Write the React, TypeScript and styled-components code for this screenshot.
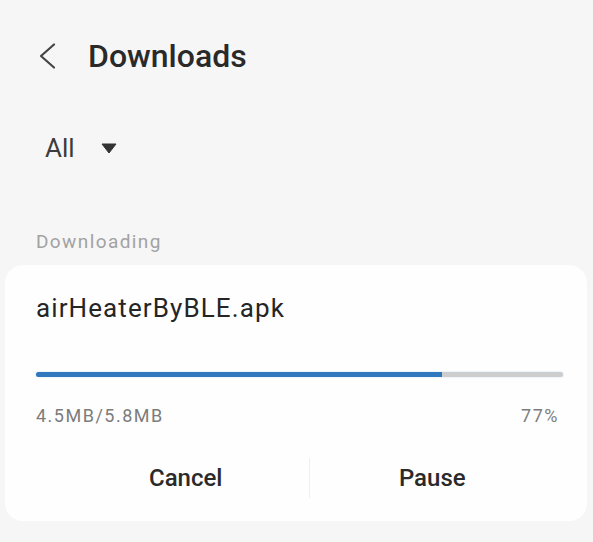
import React from "react";
import styled, { createGlobalStyle } from "styled-components";

const Global = createGlobalStyle`
  html, body { margin: 0; padding: 0; background: #f6f6f6; }
  body { font-family: Roboto, "Noto Sans", "Liberation Sans", sans-serif; }
`;

const Page = styled.div`
  width: 593px;
  height: 542px;
  background: #f6f6f6;
  display: flex;
  flex-direction: column;
  overflow: hidden;
`;

const Header = styled.div`
  display: flex;
  align-items: center;
  height: 54px;
  padding: 29px 0 0 38px;
  gap: 32px;
`;

const Title = styled.h1`
  margin: 0;
  font-size: 32px;
  font-weight: 500;
  color: #2a2a2a;
  line-height: 54px;
`;

const Filter = styled.div`
  display: flex;
  align-items: center;
  gap: 26px;
  padding: 50px 0 0 45px;
  height: 30px;
  font-size: 26px;
  line-height: 30px;
  color: #3c3c3c;
`;

const Section = styled.div`
  padding: 67px 0 0 36px;
  font-size: 19px;
  letter-spacing: 1.4px;
  line-height: 24px;
  color: #a2a2a2;
  height: 24px;
`;

const Card = styled.div`
  margin: 11px 6px 0 5px;
  height: 256px;
  background: #fefefe;
  border-radius: 18px;
  padding: 28px 24px 0 31px;
  box-sizing: border-box;
  display: flex;
  flex-direction: column;
`;

const FileName = styled.div`
  font-size: 26px;
  letter-spacing: 1.1px;
  color: #252525;
  height: 30px;
  line-height: 30px;
`;

const Track = styled.div`
  margin-top: 49px;
  height: 5px;
  border-radius: 3px;
  background: #cdcdcd;
  overflow: hidden;
  box-shadow: 0 0 2px rgba(120, 190, 240, 0.45);
`;

const Fill = styled.div`
  height: 100%;
  background: #2f78bd;
`;

const Stats = styled.div`
  display: flex;
  justify-content: space-between;
  margin-top: 28px;
  padding-right: 4px;
  font-size: 18px;
  line-height: 21px;
  letter-spacing: 1.5px;
  color: #7c7c7c;
`;

const Actions = styled.div`
  display: flex;
  align-items: center;
  margin: 29px 8px 0 27px;
  height: 46px;
`;

const Action = styled.button`
  flex: 1;
  border: none;
  background: transparent;
  font-family: inherit;
  font-size: 24px;
  font-weight: 500;
  color: #2a2a2a;
  padding: 0;
  height: 46px;
`;

const Divider = styled.div`
  width: 1px;
  height: 40px;
  background: #f0f0f0;
`;

export default function App() {
  const pct = 77;
  return (
    <Page>
      <Global />
      <Header>
        <svg width="18" height="26" viewBox="0 0 18 26">
          <path d="M16 1.5 L3 13 L16 24.5" fill="none" stroke="#444" strokeWidth="2.2" strokeLinecap="round" strokeLinejoin="round" />
        </svg>
        <Title>Downloads</Title>
      </Header>
      <Filter>
        <span>All</span>
        <svg width="16" height="11" viewBox="0 0 16 11">
          <path d="M1 1 L15 1 L8 10 Z" fill="#333" stroke="#333" strokeWidth="1" strokeLinejoin="round" />
        </svg>
      </Filter>
      <Section>Downloading</Section>
      <Card>
        <FileName>airHeaterByBLE.apk</FileName>
        <Track>
          <Fill style={{ width: `${pct}%` }} />
        </Track>
        <Stats>
          <span>4.5MB/5.8MB</span>
          <span>{pct}%</span>
        </Stats>
        <Actions>
          <Action>Cancel</Action>
          <Divider />
          <Action>Pause</Action>
        </Actions>
      </Card>
    </Page>
  );
}
